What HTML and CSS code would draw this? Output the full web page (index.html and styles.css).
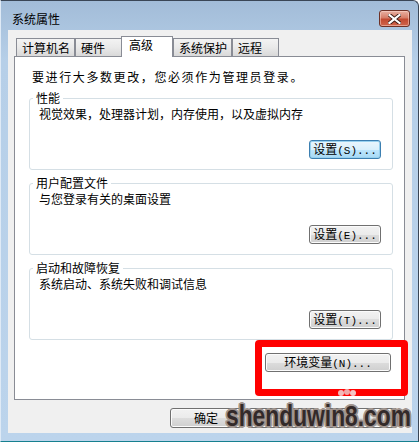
FILE: index.html
```html
<!DOCTYPE html>
<html lang="zh-CN">
<head>
    <meta charset="UTF-8">
    <meta name="viewport" content="width=device-width, initial-scale=1.0">
    <title>系统属性</title>
    <link rel="stylesheet" href="styles.css">
</head>
<body>
    <div class="window">
        <div class="titlebar">
            <span class="title">系统属性</span>
            <button class="close" aria-label="关闭">
                <svg width="13" height="10" viewBox="0 0 13 10">
                    <path d="M1.5 1 L11.5 9 M11.5 1 L1.5 9" stroke="#3b1c16" stroke-width="4" stroke-linecap="square"/>
                    <path d="M1.5 1 L11.5 9 M11.5 1 L1.5 9" stroke="#ffffff" stroke-width="2.2" stroke-linecap="square"/>
                </svg>
            </button>
        </div>
        <div class="client">
            <div class="tabs">
                <div class="tab">计算机名</div>
                <div class="tab">硬件</div>
                <div class="tab active">高级</div>
                <div class="tab">系统保护</div>
                <div class="tab">远程</div>
            </div>
            <div class="panel">
                <p class="intro">要进行大多数更改，您必须作为管理员登录。</p>

                <div class="group">
                    <span class="legend">性能</span>
                    <p class="desc">视觉效果，处理器计划，内存使用，以及虚拟内存</p>
                    <button class="btn default">设置<span class="key">(S)...</span></button>
                </div>

                <div class="group">
                    <span class="legend">用户配置文件</span>
                    <p class="desc">与您登录有关的桌面设置</p>
                    <button class="btn">设置<span class="key">(E)...</span></button>
                </div>

                <div class="group">
                    <span class="legend">启动和故障恢复</span>
                    <p class="desc">系统启动、系统失败和调试信息</p>
                    <button class="btn">设置<span class="key">(T)...</span></button>
                </div>

                <button class="btn env">环境变量<span class="key">(N)...</span></button>
            </div>
            <div class="footer">
                <button class="btn">确定</button>
                <!-- these two sit under the watermark, their labels are not visible -->
                <button class="btn" aria-label="取消"></button>
                <button class="btn" aria-label="应用"></button>
            </div>
        </div>

        <!-- overlays from the screenshot: red marker and site watermark -->
        <div class="highlight"></div>
        <svg class="paw" width="20" height="10" viewBox="0 0 20 10">
            <circle cx="4" cy="5" r="3" fill="#f3b9b9"/>
            <circle cx="10" cy="4" r="3" fill="#f0a8a8"/>
            <circle cx="16" cy="5" r="3" fill="#f5c4c4"/>
        </svg>
        <div class="watermark">shenduwin8.com</div>
    </div>
</body>
</html>
```

FILE: styles.css
```css
html {
    background: #ffffff;
}

body {
    margin: 0;
    font-family: "Noto Sans CJK SC", "Noto Sans", sans-serif;
    font-size: 12px;
    color: #000;
}

.window {
    position: relative;
    width: 419px;
    height: 442px;
    box-sizing: border-box;
    border-top: 1px solid #3a4656;
    border-right: 1px solid #3a4656;
    border-left: 1px solid #dfeaf6;
    border-bottom: 1px solid #16808f;
    border-top-right-radius: 6px;
    background: linear-gradient(#a2bcd8, #b6cfe8 60px, #bcd4ec);
    overflow: hidden;
}

/* title bar */
.titlebar {
    height: 29px;
    display: flex;
    justify-content: space-between;
    align-items: flex-start;
}

.title {
    margin: 11px 0 0 11px;
    line-height: 14px;
    color: #000;
}

.close {
    margin: 9px 8px 0 0;
    width: 31px;
    height: 17px;
    padding: 0;
    border: 1px solid #6e3126;
    border-radius: 3px;
    background: linear-gradient(#e8b1a2, #d77e69 45%, #c24a31 55%, #d0664d);
    box-shadow: inset 0 0 0 1px rgba(255, 220, 210, 0.5);
    display: flex;
    justify-content: center;
    align-items: center;
}

/* grey client area */
.client {
    margin: 0 6px 0 7px;
    height: 403px;
    box-sizing: border-box;
    padding: 6px 8px 0 6px;
    background: #f0f0f0;
}

.tabs {
    display: flex;
    align-items: flex-end;
    height: 20px;
    margin-left: 2px;
}

.tab {
    position: relative;
    height: 18px;
    min-width: 47px;
    box-sizing: border-box;
    padding: 2px 4px 0 5px;
    line-height: 14px;
    border: 1px solid #898c95;
    border-bottom: none;
    background: linear-gradient(#f3f3f3, #e9e9e9 50%, #d9d9d9);
    white-space: nowrap;
}

.tab.active {
    z-index: 1;
    height: 21px;
    min-width: 52px;
    margin: 0 0 -1px -1px;
    padding: 1px 4px 0 7px;
    background: #ffffff;
}

.panel {
    width: 391px;
    height: 344px;
    box-sizing: border-box;
    border: 1px solid #898c95;
    background: #ffffff;
    padding: 13px 11px 0 14px;
    display: flex;
    flex-direction: column;
}

.intro {
    margin: 0 0 1px 3px;
    line-height: 14px;
    letter-spacing: 1.6px;
}

.group {
    margin-top: 13px;
    height: 72px;
    box-sizing: border-box;
    border: 1px solid #d5dfe5;
    border-radius: 3px;
    padding: 0 11px 10px 9px;
    display: flex;
    flex-direction: column;
}

.legend {
    align-self: flex-start;
    margin: -8px 0 0 -6px;
    padding: 0 3px;
    line-height: 14px;
    background: #ffffff;
}

.desc {
    margin: 2px 0 0 0;
    line-height: 14px;
}

/* push buttons */
.btn {
    height: 19px;
    width: 72px;
    padding: 0;
    border: 1px solid #707070;
    border-radius: 3px;
    background: linear-gradient(#f2f2f2, #ebebeb 50%, #dddddd 50%, #cfcfcf);
    box-shadow: inset 0 0 0 1px #fbfbfb;
    font-family: inherit;
    font-size: 12px;
    line-height: 14px;
    color: #000;
    white-space: nowrap;
}

.btn .key {
    font-family: "Liberation Mono", monospace;
    font-size: 11px;
}

.group .btn {
    margin-top: auto;
    align-self: flex-end;
}

.btn.default {
    border-color: #3c7fb1;
    background: linear-gradient(#eaf6fd, #d9f0fc 50%, #bee6fd 50%, #a7d9f5);
    box-shadow: inset 0 0 0 1px #98d1ef;
}

.btn.env {
    width: 126px;
    margin: 13px 2px 0 0;
    align-self: flex-end;
}

.footer {
    display: flex;
    justify-content: flex-end;
    gap: 6px;
    margin: 8px 6px 0 0;
}

.footer .btn {
    height: 20px;
}

/* red marker drawn over the dialog */
.highlight {
    position: absolute;
    left: 254px;
    top: 339px;
    width: 153px;
    height: 56px;
    box-sizing: border-box;
    border: 7px solid #ff0000;
    border-radius: 4px;
}

.paw {
    position: absolute;
    left: 336px;
    top: 387px;
}

.watermark {
    position: absolute;
    left: 225px;
    top: 400px;
    font-family: "Liberation Sans", Arial, sans-serif;
    font-weight: bold;
    font-size: 30px;
    line-height: 1;
    color: #332a2a;
    transform: scaleX(0.76);
    transform-origin: left top;
    text-shadow:
        1px 1px 0 #a0958f, -1px -1px 0 #a0958f, 1px -1px 0 #a0958f, -1px 1px 0 #a0958f,
        2px 0 0 #a0958f, -2px 0 0 #a0958f, 0 2px 0 #a0958f, 0 -2px 0 #a0958f,
        2px 1px 0 #a0958f, -2px 1px 0 #a0958f, 2px -1px 0 #a0958f, -2px -1px 0 #a0958f;
}
```
